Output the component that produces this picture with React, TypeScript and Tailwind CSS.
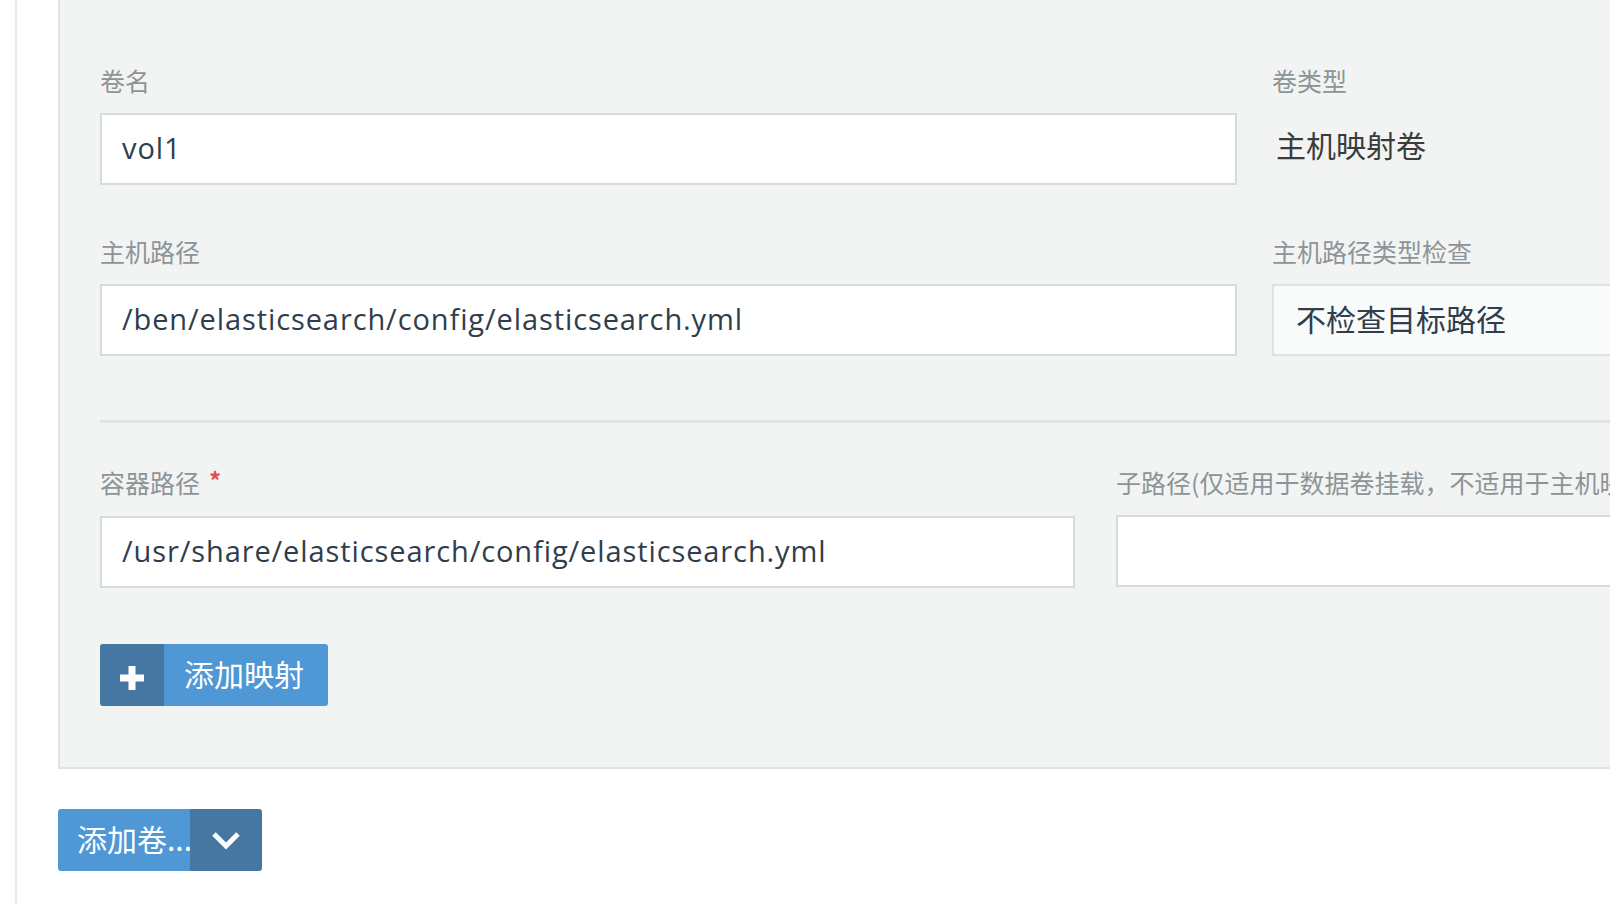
import React from "react";

const cjk = "font-['Noto_Sans_CJK_SC',sans-serif]";
const latin = "font-['Open_Sans','Noto_Sans_CJK_SC',sans-serif]";

const Label = ({ children, required }: { children: React.ReactNode; required?: boolean }) => (
    <div className={`${cjk} text-[25px] leading-[32px] text-[#8d9497] whitespace-nowrap`}>
        {children}
        {required && (
            <span className="ml-[9px] text-[24px] font-bold text-[#e0514f] relative top-[-3px]">*</span>
        )}
    </div>
);

const TextBox = ({ value, className = "" }: { value?: string; className?: string }) => (
    <div
        className={`h-[72px] border-2 border-[#d5dcdf] bg-white flex items-center pl-[20px] pb-[3px] ${latin} text-[29px] tracking-[0.9px] text-[#2f3d4d] whitespace-nowrap overflow-hidden ${className}`}
    >
        {value}
    </div>
);

const PlusIcon = () => (
    <svg width="24" height="24" viewBox="0 0 24 24" fill="white">
        <path d="M8.5 0h7v8.5H24v7h-8.5V24h-7v-8.5H0v-7h8.5z" />
    </svg>
);

const ChevronIcon = () => (
    <svg width="30" height="20" viewBox="0 0 30 20" fill="none">
        <path d="M3 4l12 12L27 4" stroke="white" strokeWidth="5" strokeLinejoin="miter" />
    </svg>
);

export default function App() {
    return (
        <div className="w-screen h-screen overflow-hidden bg-white flex">
            <div className="w-[15px] shrink-0" />
            <div className="w-[2px] shrink-0 bg-[#e6eaea]" />
            <div className="pl-[41px] shrink-0">
                <div className="w-[1700px] bg-[#f2f4f3] border-l-2 border-b-2 border-[#dfe4e6] pl-[40px] pt-[64px] pb-[61px]">
                    {/* volume name / type */}
                    <div className="flex gap-[35px]">
                        <div className="w-[1137px] shrink-0">
                            <Label>卷名</Label>
                            <TextBox value="vol1" className="mt-[17px]" />
                        </div>
                        <div className="w-[400px] shrink-0">
                            <Label>卷类型</Label>
                            <div className={`${cjk} mt-[17px] h-[72px] flex items-center pl-[4px] pb-[10px] text-[30px] text-[#3b3b3b]`}>
                                主机映射卷
                            </div>
                        </div>
                    </div>

                    {/* host path */}
                    <div className="flex gap-[35px] mt-[50px]">
                        <div className="w-[1137px] shrink-0">
                            <Label>主机路径</Label>
                            <TextBox value="/ben/elasticsearch/config/elasticsearch.yml" className="mt-[17px]" />
                        </div>
                        <div className="w-[420px] shrink-0">
                            <Label>主机路径类型检查</Label>
                            <div
                                className={`${cjk} mt-[17px] h-[72px] border-2 border-[#dde3e5] bg-[#f9fafa] flex items-center pl-[22px] pb-[4px] text-[30px] text-[#2f3d4d] whitespace-nowrap`}
                            >
                                不检查目标路径
                            </div>
                        </div>
                    </div>

                    <div className="h-[3px] bg-[#dfe4e5] mt-[64px]" />

                    {/* container path / sub path */}
                    <div className="flex gap-[41px] mt-[43px]">
                        <div className="w-[975px] shrink-0">
                            <Label required>容器路径</Label>
                            <TextBox value="/usr/share/elasticsearch/config/elasticsearch.yml" className="mt-[17px]" />
                        </div>
                        <div className="w-[600px] shrink-0">
                            <Label>子路径(仅适用于数据卷挂载，不适用于主机映射卷)</Label>
                            <TextBox className="mt-[17px]" />
                        </div>
                    </div>

                    <button className="mt-[56px] h-[62px] flex rounded-[3px] overflow-hidden">
                        <span className="w-[64px] h-full bg-[#4677a3] flex items-center justify-center pt-[6px]">
                            <PlusIcon />
                        </span>
                        <span className={`${cjk} h-full bg-[#4f97d5] flex items-center pl-[20px] pr-[24px] pb-[3px] text-[30px] text-white`}>
                            添加映射
                        </span>
                    </button>
                </div>

                <button className="mt-[40px] h-[62px] flex rounded-[3px] overflow-hidden">
                    <span className={`${cjk} w-[132px] h-full bg-[#4f97d5] flex items-center pl-[19px] pb-[3px] text-[30px] text-white whitespace-nowrap`}>
                        添加卷...
                    </span>
                    <span className="w-[72px] h-full bg-[#4677a3] flex items-center justify-center">
                        <ChevronIcon />
                    </span>
                </button>
            </div>
        </div>
    );
}
